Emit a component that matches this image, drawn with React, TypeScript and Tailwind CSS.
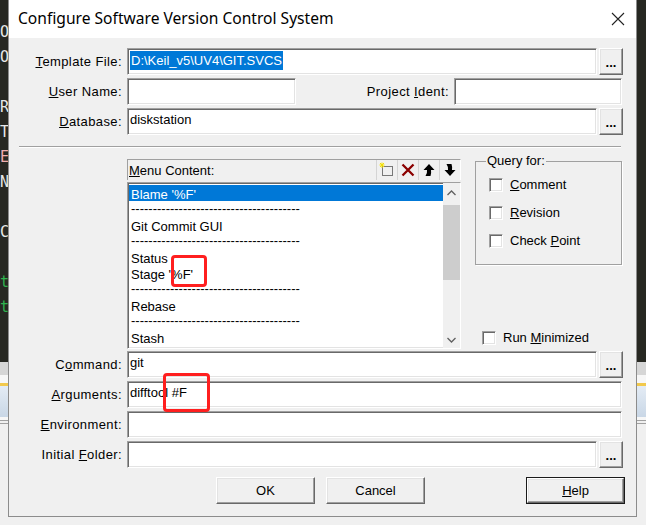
import type { ReactNode } from 'react'

const sunken =
  'border border-t-[#a0a0a0] border-l-[#a0a0a0] border-r-white border-b-white shadow-[inset_1px_1px_0_#696969,inset_-1px_-1px_0_#e3e3e3]'
const raised =
  'border border-t-white border-l-white border-r-[#696969] border-b-[#696969] shadow-[inset_-1px_-1px_0_#a0a0a0,inset_1px_1px_0_#e3e3e3] bg-[#f0f0f0]'

const bgLines: { ch: string; color: string }[] = [
  { ch: 'O', color: 'text-[#e8e8e8]' },
  { ch: 'O', color: 'text-[#e8e8e8]' },
  { ch: '', color: '' },
  { ch: 'R', color: 'text-[#e8e8e8]' },
  { ch: 'T', color: 'text-[#e8e8e8]' },
  { ch: 'E', color: 'text-[#f0b0b0]' },
  { ch: 'N', color: 'text-[#e8e8e8]' },
  { ch: '', color: '' },
  { ch: 'C', color: 'text-[#e8e8e8]' },
  { ch: '', color: '' },
  { ch: 't', color: 'text-[#2fb34f]' },
  { ch: 't', color: 'text-[#2fb34f]' },
]

function BgStrip({ letters }: { letters?: boolean }) {
  return (
    <div className="flex flex-col h-full">
      <div className="h-[362px] bg-[#272822] overflow-hidden pt-[20px] font-['DejaVu_Sans_Mono',monospace] text-[15px] leading-[25px]">
        {letters &&
          bgLines.map((l, i) => (
            <div key={i} className={`h-[25px] ${l.color}`}>
              {l.ch}
            </div>
          ))}
      </div>
      <div className="h-[13px] bg-[#d6d6d6]" />
      <div className="h-[8px] bg-[#f7f7f7]" />
      <div className="h-[3px] bg-[#f2c94c]" />
      <div className="h-[31px] bg-gradient-to-b from-[#e4ecf5] to-[#c9d7e6]" />
      <div className="h-[3px] bg-[#f7f7f7]" />
      <div className="h-[1px] bg-[#a0a0a0]" />
      <div className="h-[2px] bg-[#f0f0f0]" />
      <div className="h-[1px] bg-[#a0a0a0]" />
      <div className="flex-1 bg-[#f0f0f0]" />
    </div>
  )
}

function Row({ label, children }: { label: ReactNode; children: ReactNode }) {
  return (
    <div className="flex h-[27px]">
      <div className="w-[113px] flex items-center justify-end pt-[1px] whitespace-nowrap tracking-[0.4px]">{label}</div>
      <div className="ml-[5px] flex">{children}</div>
    </div>
  )
}

function Input({ w, children }: { w: string; children?: ReactNode }) {
  return (
    <div className={`${sunken} bg-white h-full ${w} flex items-center pl-[2px] pb-[3px] whitespace-nowrap`}>
      {children}
    </div>
  )
}

function Dots() {
  return (
    <div className={`${raised} ml-[2px] w-[24px] h-full flex items-center justify-center pt-[2px] font-bold text-[13px] leading-[13px]`}>
      ...
    </div>
  )
}

function Check({ label }: { label: ReactNode }) {
  return (
    <div className="flex items-center h-[14px]">
      <span className={`${sunken} bg-white w-[14px] h-[14px]`} />
      <span className="ml-[7px]">{label}</span>
    </div>
  )
}

function Btn({ children, def }: { children: ReactNode; def?: boolean }) {
  return (
    <div className={`w-[99px] h-[27px] ${def ? 'border border-[#1a1a1a]' : ''}`}>
      <div className={`${raised} w-full h-full flex items-center justify-center`}>{children}</div>
    </div>
  )
}

function Dash() {
  return (
    <div className="h-[16px] leading-[16px] pl-[2px] overflow-hidden whitespace-nowrap w-[172px]">
      {'-'.repeat(39)}
    </div>
  )
}

function Item({ children, sel }: { children: ReactNode; sel?: boolean }) {
  return (
    <div className={`h-[16px] leading-[16px] pl-[2px] pt-[2px] ${sel ? 'bg-[#0078d7] text-white' : ''}`}>
      {children}
    </div>
  )
}

function ToolBtn({ children }: { children: ReactNode }) {
  return (
    <div className="w-[21px] h-[20px] border-l border-[#d4d4d4] flex items-center justify-center">{children}</div>
  )
}

export default function App() {
  return (
    <div className="relative w-[646px] h-[525px] flex overflow-hidden bg-[#f0f0f0] text-[13px] text-black font-['Liberation_Sans',Arial,sans-serif]">
      <div className="w-[8px] overflow-hidden">
        <BgStrip letters />
      </div>

      <div className="w-[629px] flex flex-col bg-[#f0f0f0]">
        <div className="h-[517px] flex flex-col border-x border-b border-[#8c8c8c]">
          {/* title bar */}
          <div className="h-[38px] bg-white flex items-center pl-[9px] pr-[9px]">
            <span className="font-['Noto_Sans',sans-serif] text-[15.6px] flex-1">
              Configure Software Version Control System
            </span>
            <svg width="14" height="14" viewBox="0 0 14 14" className="mr-[2px]">
              <path d="M1 1 L13 13 M13 1 L1 13" stroke="#222" strokeWidth="1.1" />
            </svg>
          </div>

          {/* body */}
          <div className="flex-1 flex flex-col pt-[10px]">
            <div className="flex flex-col gap-[3px]">
              <Row
                label={
                  <span>
                    <u>T</u>emplate File:
                  </span>
                }
              >
                <Input w="w-[470px]">
                  <span className="bg-[#0078d7] text-white leading-[19px] pl-[1px] pr-[1px]">
                    D:\Keil_v5\UV4\GIT.SVCS
                  </span>
                </Input>
                <Dots />
              </Row>
              <Row
                label={
                  <span>
                    <u>U</u>ser Name:
                  </span>
                }
              >
                <Input w="w-[169px]" />
                <div className="w-[153px] flex items-center justify-end pt-[1px] whitespace-nowrap tracking-[0.4px]">
                  <span>
                    Project <u>I</u>dent:
                  </span>
                </div>
                <div className="ml-[5px] flex">
                  <Input w="w-[168px]" />
                </div>
              </Row>
              <Row
                label={
                  <span>
                    <u>D</u>atabase:
                  </span>
                }
              >
                <Input w="w-[470px]">diskstation</Input>
                <Dots />
              </Row>
            </div>

            <div className="mt-[11px] ml-[10px] w-[602px] h-[2px] border-t border-[#a0a0a0] border-b border-b-white" />

            {/* middle */}
            <div className="mt-[11px] h-[190px] flex">
              <div className="ml-[118px] w-[334px] flex flex-col">
                <div className="h-[21px] flex items-center pt-[2px] border-t border-l border-[#a0a0a0] border-r border-r-white">
                  <span className="pl-[1px] flex-1">
                    <u>M</u>enu Content:
                  </span>
                  <div className="flex h-[20px] -mt-[2px]">
                    <ToolBtn>
                      <svg width="16" height="16" viewBox="0 0 16 16">
                        <rect x="3.5" y="4.5" width="10" height="9" fill="none" stroke="#000" strokeDasharray="1 1" />
                        <path d="M3 0.5 V6 M0.5 3 H5.5 M1 1 L5 5 M5 1 L1 5" stroke="#f5e000" strokeWidth="1" />
                      </svg>
                    </ToolBtn>
                    <ToolBtn>
                      <svg width="16" height="16" viewBox="0 0 16 16">
                        <path d="M2.5 2.5 L13.5 13.5 M13.5 2.5 L2.5 13.5" stroke="#8b0000" strokeWidth="2.3" />
                      </svg>
                    </ToolBtn>
                    <ToolBtn>
                      <svg width="16" height="16" viewBox="0 0 16 16">
                        <path d="M8 2 L2.5 8 H6 Q6.5 11 4.5 14 H9.5 Q10.5 11 10 8 H13.5 Z" fill="#000" />
                      </svg>
                    </ToolBtn>
                    <ToolBtn>
                      <svg width="16" height="16" viewBox="0 0 16 16">
                        <path d="M8 14 L2.5 8 H6 Q6.5 5 4.5 2 H9.5 Q10.5 5 10 8 H13.5 Z" fill="#000" />
                      </svg>
                    </ToolBtn>
                  </div>
                </div>
                <div className={`${sunken} mt-[2px] flex-1 bg-white flex p-[1px]`}>
                  <div className="flex-1 flex flex-col pt-[1px]">
                    <Item sel>Blame '%F'</Item>
                    <Dash />
                    <Item>Git Commit GUI</Item>
                    <Dash />
                    <Item>Status</Item>
                    <Item>Stage '%F'</Item>
                    <Dash />
                    <Item>Rebase</Item>
                    <Dash />
                    <Item>Stash</Item>
                  </div>
                  <div className="w-[17px] bg-[#f0f0f0] flex flex-col -my-[1px] -mr-[1px]">
                    <div className="h-[20px] flex items-center justify-center">
                      <svg width="9" height="6" viewBox="0 0 9 6">
                        <path d="M0.5 5 L4.5 1 L8.5 5" fill="none" stroke="#606060" strokeWidth="1.3" />
                      </svg>
                    </div>
                    <div className="mt-[2px] h-[75px] bg-[#cdcdcd]" />
                    <div className="flex-1" />
                    <div className="h-[17px] flex items-center justify-center">
                      <svg width="9" height="6" viewBox="0 0 9 6">
                        <path d="M0.5 1 L4.5 5 L8.5 1" fill="none" stroke="#606060" strokeWidth="1.3" />
                      </svg>
                    </div>
                  </div>
                </div>
              </div>

              <div className="ml-[14px] w-[147px] flex flex-col">
                <fieldset className="-mt-[5px] h-[111px] border border-[#a0a0a0] shadow-[1px_1px_0_#fff] pl-[13px]">
                  <legend className="-ml-[3px] px-[1px] leading-[14px]">Query for:</legend>
                  <div className="pt-[10px] flex flex-col gap-[14px]">
                    <Check
                      label={
                        <span>
                          <u>C</u>omment
                        </span>
                      }
                    />
                    <Check
                      label={
                        <span>
                          <u>R</u>evision
                        </span>
                      }
                    />
                    <Check
                      label={
                        <span>
                          Check <u>P</u>oint
                        </span>
                      }
                    />
                  </div>
                </fieldset>
                <div className="mt-auto mb-[4px] pl-[7px]">
                  <Check
                    label={
                      <span>
                        Run <u>M</u>inimized
                      </span>
                    }
                  />
                </div>
              </div>
            </div>

            <div className="mt-[2px] flex flex-col gap-[3px]">
              <Row
                label={
                  <span>
                    C<u>o</u>mmand:
                  </span>
                }
              >
                <Input w="w-[470px]">git</Input>
                <Dots />
              </Row>
              <Row
                label={
                  <span>
                    <u>A</u>rguments:
                  </span>
                }
              >
                <Input w="w-[495px]">difftool #F</Input>
              </Row>
              <Row
                label={
                  <span>
                    <u>E</u>nvironment:
                  </span>
                }
              >
                <Input w="w-[495px]" />
              </Row>
              <Row
                label={
                  <span>
                    Initial <u>F</u>older:
                  </span>
                }
              >
                <Input w="w-[470px]" />
                <Dots />
              </Row>
            </div>

            <div className="mt-[9px] flex">
              <div className="ml-[207px]">
                <Btn>OK</Btn>
              </div>
              <div className="ml-[11px]">
                <Btn>Cancel</Btn>
              </div>
              <div className="ml-[101px]">
                <Btn def>
                  <span>
                    <u>H</u>elp
                  </span>
                </Btn>
              </div>
            </div>
          </div>
        </div>
      </div>

      <div className="flex-1 overflow-hidden">
        <BgStrip />
      </div>

      {/* annotation boxes */}
      <div className="absolute left-[171px] top-[255px] w-[36px] h-[32px] border-[3px] border-[#ff1f1f] rounded-[4px]" />
      <div className="absolute left-[163px] top-[373px] w-[47px] h-[39px] border-[3px] border-[#ff1f1f] rounded-[4px]" />
    </div>
  )
}
